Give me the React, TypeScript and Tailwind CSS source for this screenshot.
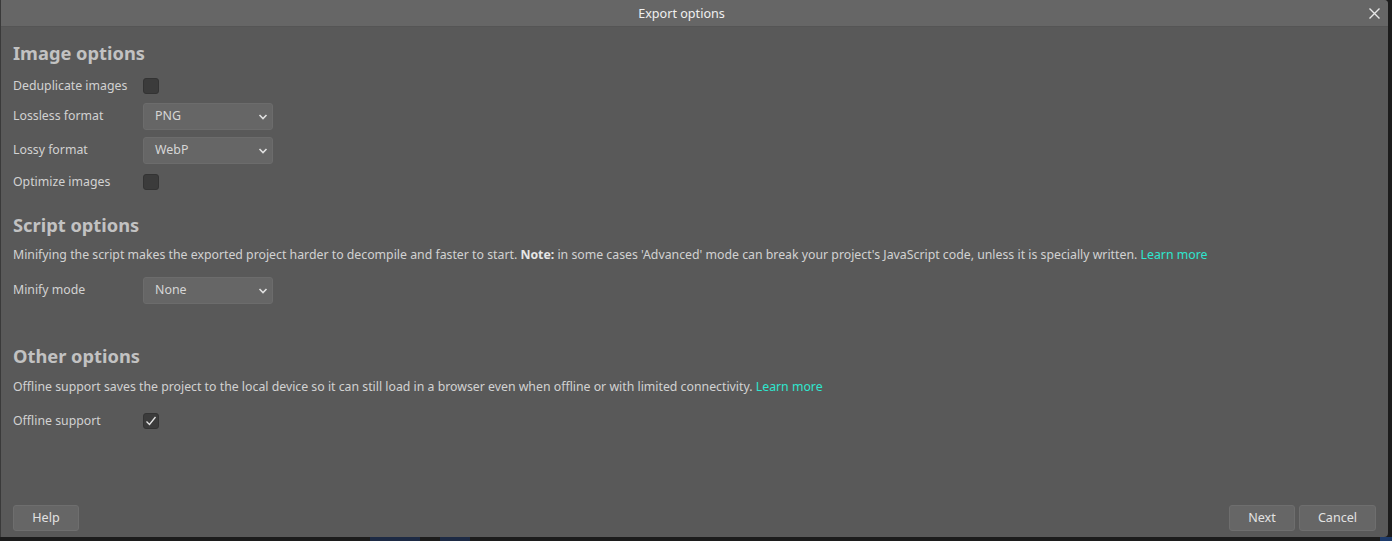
import React from "react";

const font = { fontFamily: '"Noto Sans", "Open Sans", sans-serif' };

function Checkbox({ checked }: { checked?: boolean }) {
  return (
    <div className="w-[16px] h-[16px] rounded-[3px] bg-[#3b3b3b] border border-[#333] flex items-center justify-center">
      {checked && (
        <svg width="12" height="12" viewBox="0 0 12 12" fill="none">
          <path d="M1.5 6.5 L4.5 9.5 L10.5 2" stroke="#e6e6e6" strokeWidth="1.3" />
        </svg>
      )}
    </div>
  );
}

function Select({ value }: { value: string }) {
  return (
    <div className="w-[130px] h-[27px] rounded-[3px] bg-[#666666] border border-[#6c6c6c] flex items-center justify-between pl-[11px] pr-[4px] text-[#d6d6d6] text-[12.4px]">
      <span>{value}</span>
      <svg width="10" height="10" viewBox="0 0 10 10" fill="none">
        <path d="M1.5 3 L5 6.5 L8.5 3" stroke="#e0e0e0" strokeWidth="1.6" />
      </svg>
    </div>
  );
}

function Row({ label, children, h }: { label: string; children: React.ReactNode; h: string }) {
  return (
    <div className={`flex items-center ${h}`}>
      <div className="w-[130px] text-[12.3px] text-[#d2d2d2]">{label}</div>
      {children}
    </div>
  );
}

function Btn({ label, w }: { label: string; w: string }) {
  return (
    <button className={`${w} h-[26px] rounded-[3px] bg-[#666666] border border-[#6e6e6e] text-[12.6px] text-[#e2e2e2] flex items-center justify-center`}>
      {label}
    </button>
  );
}

export default function App() {
  return (
    <div className="w-[1392px] h-[541px] bg-[#1c1c1c] overflow-hidden relative" style={font}>
      <div className="absolute left-[370px] bottom-0 w-[50px] h-[4px] bg-[#1d2a44]" />
      <div className="absolute left-[440px] bottom-0 w-[30px] h-[4px] bg-[#1d2a44]" />
      <div className="absolute left-[1380px] bottom-0 w-[12px] h-[4px] bg-[#1d3a6a]" />
      <div className="w-[1388px] h-[537px] flex flex-col bg-[#595959] border-l border-[#3a3a3a] rounded-br-[4px] rounded-tr-[4px] overflow-hidden relative">
        <div className="h-[27px] shrink-0 bg-[#666666] border-b border-[#555] flex items-center justify-center relative pt-[3px]">
          <span className="text-[12.6px] text-[#f0f0f0] pr-[26px]">Export options</span>
          <svg className="absolute right-[8px] top-[8px]" width="11" height="11" viewBox="0 0 11 11" fill="none">
            <path d="M0.5 0.5 L10.5 10.5 M10.5 0.5 L0.5 10.5" stroke="#e8e8e8" strokeWidth="1.4" />
          </svg>
        </div>
        <div className="flex-1 flex flex-col px-[12px]">
          <div className="h-[17px]" />
          <h2 className="text-[18.3px] font-bold text-[#c2c2c2] leading-[18px] h-[18px]">Image options</h2>
          <div className="h-[11px]" />
          <Row label="Deduplicate images" h="h-[26px]"><Checkbox /></Row>
          <div className="h-[4px]" />
          <Row label="Lossless format" h="h-[27px]"><Select value="PNG" /></Row>
          <div className="h-[7px]" />
          <Row label="Lossy format" h="h-[27px]"><Select value="WebP" /></Row>
          <div className="h-[5px]" />
          <Row label="Optimize images" h="h-[26px]"><Checkbox /></Row>
          <div className="h-[21px]" />
          <h2 className="text-[18.3px] font-bold text-[#c2c2c2] leading-[18px] h-[18px]">Script options</h2>
          <div className="h-[12px]" />
          <p className="text-[12.3px] text-[#d2d2d2] leading-[18px] whitespace-nowrap">
            Minifying the script makes the exported project harder to decompile and faster to start. <b className="text-[#e6e6e6]">Note:</b> in some cases 'Advanced' mode can break your project's JavaScript code, unless it is specially written.{" "}
            <span className="text-[#2ee6cf]">Learn more</span>
          </p>
          <div className="h-[13px]" />
          <Row label="Minify mode" h="h-[27px]"><Select value="None" /></Row>
          <div className="h-[43px]" />
          <h2 className="text-[18.3px] font-bold text-[#c2c2c2] leading-[18px] h-[18px]">Other options</h2>
          <div className="h-[13px]" />
          <p className="text-[12.3px] text-[#d2d2d2] leading-[18px] whitespace-nowrap">
            Offline support saves the project to the local device so it can still load in a browser even when offline or with limited connectivity.{" "}
            <span className="text-[#2ee6cf]">Learn more</span>
          </p>
          <div className="h-[12px]" />
          <Row label="Offline support" h="h-[26px]"><Checkbox checked /></Row>
          <div className="flex-1" />
          <div className="flex items-center justify-between pb-[6px]">
            <Btn label="Help" w="w-[66px]" />
            <div className="flex gap-[4px]">
              <Btn label="Next" w="w-[66px]" />
              <Btn label="Cancel" w="w-[77px]" />
            </div>
          </div>
        </div>
      </div>
    </div>
  );
}
